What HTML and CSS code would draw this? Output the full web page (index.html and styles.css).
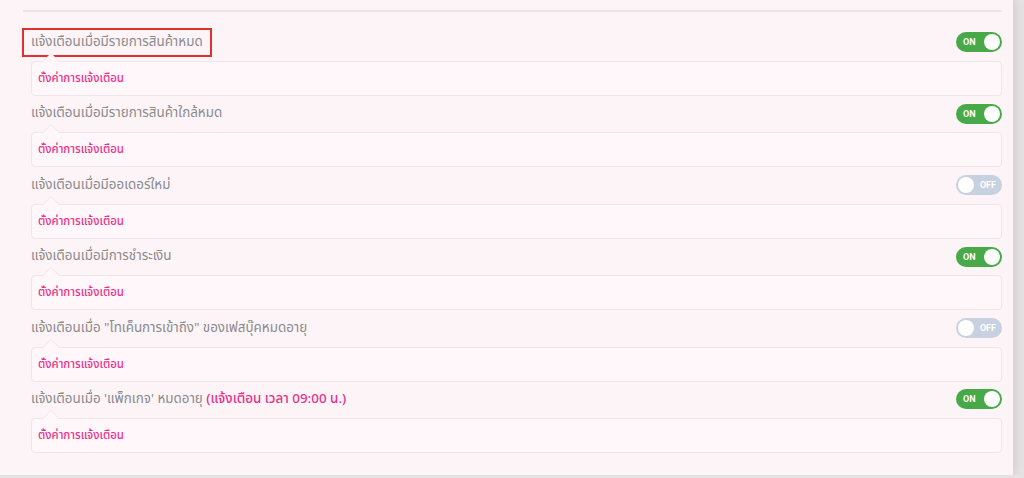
FILE: index.html
```html
<!DOCTYPE html>
<html lang="th">
<head>
<meta charset="utf-8">
<link rel="stylesheet" href="styles.css">
</head>
<body>
<div class="panel">
  <div class="divider"></div>
  <div class="list">
    <div class="row">
      <div class="header">
        <span class="label highlight">แจ้งเตือนเมื่อมีรายการสินค้าหมด</span>
        <span class="toggle on"><span class="toggle-text">ON</span><span class="knob"></span></span>
      </div>
      <div class="box"><span class="box-link">ตั้งค่าการแจ้งเตือน</span></div>
    </div>
    <div class="row">
      <div class="header">
        <span class="label">แจ้งเตือนเมื่อมีรายการสินค้าใกล้หมด</span>
        <span class="toggle on"><span class="toggle-text">ON</span><span class="knob"></span></span>
      </div>
      <div class="box"><span class="box-link">ตั้งค่าการแจ้งเตือน</span></div>
    </div>
    <div class="row">
      <div class="header">
        <span class="label">แจ้งเตือนเมื่อมีออเดอร์ใหม่</span>
        <span class="toggle off"><span class="knob"></span><span class="toggle-text">OFF</span></span>
      </div>
      <div class="box"><span class="box-link">ตั้งค่าการแจ้งเตือน</span></div>
    </div>
    <div class="row">
      <div class="header">
        <span class="label">แจ้งเตือนเมื่อมีการชำระเงิน</span>
        <span class="toggle on"><span class="toggle-text">ON</span><span class="knob"></span></span>
      </div>
      <div class="box"><span class="box-link">ตั้งค่าการแจ้งเตือน</span></div>
    </div>
    <div class="row">
      <div class="header">
        <span class="label">แจ้งเตือนเมื่อ "โทเค็นการเข้าถึง" ของเฟสบุ๊คหมดอายุ</span>
        <span class="toggle off"><span class="knob"></span><span class="toggle-text">OFF</span></span>
      </div>
      <div class="box"><span class="box-link">ตั้งค่าการแจ้งเตือน</span></div>
    </div>
    <div class="row">
      <div class="header">
        <span class="label">แจ้งเตือนเมื่อ 'แพ็กเกจ' หมดอายุ <span class="accent">(แจ้งเตือน เวลา 09:00 น.)</span></span>
        <span class="toggle on"><span class="toggle-text">ON</span><span class="knob"></span></span>
      </div>
      <div class="box"><span class="box-link">ตั้งค่าการแจ้งเตือน</span></div>
    </div>
  </div>
</div>
</body>
</html>
```

FILE: styles.css
```css
* { box-sizing: border-box; }

html, body {
  margin: 0;
  padding: 0;
  background: #e6e2e4;
  font-family: "Noto Sans Thai", "Noto Sans", "DejaVu Sans", sans-serif;
}

.panel {
  width: 1013px;
  height: 475px;
  background: #fdf4f7;
  padding: 10px 11px 0 23px;
  box-shadow: 2px 0 10px rgba(150, 130, 140, 0.25);
}

.divider {
  height: 2px;
  background: #ece4e7;
}

.list {
  padding-top: 12.6px;
  padding-left: 8px;
}

.row {
  padding-top: 7.4px;
}

.header {
  display: flex;
  align-items: center;
  justify-content: space-between;
  height: 21px;
  margin-bottom: 8px;
}

.label {
  font-size: 13.4px;
  color: #8b8b8b;
  line-height: 21px;
  white-space: nowrap;
}

.label.highlight {
  border: 2px solid #e0312f;
  padding: 2px 7px;
  margin-left: -9px;
}

.accent {
  color: #e8318b;
  font-weight: 500;
}

.box {
  position: relative;
  height: 35px;
  border: 1px solid #f0e5ea;
  border-radius: 4px;
  background: #fff7fa;
  display: flex;
  align-items: center;
  padding-left: 6px;
}

.box::before,
.box::after {
  content: "";
  position: absolute;
  left: 11px;
  width: 0;
  height: 0;
  border-left: 8px solid transparent;
  border-right: 8px solid transparent;
}

.box::before {
  top: -9px;
  border-bottom: 8px solid #efe4e9;
}

.box::after {
  top: -8px;
  border-bottom: 8px solid #fff7fa;
}

.box-link {
  font-size: 11.4px;
  font-weight: 500;
  color: #e8318b;
}

.toggle {
  position: relative;
  display: flex;
  align-items: center;
  width: 46px;
  height: 20px;
  border-radius: 10px;
  padding: 0 2px;
  font-family: "Roboto", "Liberation Sans", sans-serif;
  font-size: 9px;
  font-weight: 700;
  color: #ffffff;
}

.toggle.on {
  background: #47a948;
  justify-content: space-between;
  padding-left: 7px;
}

.toggle.off {
  background: #c7d1df;
  justify-content: space-between;
  padding-right: 6px;
}

.knob {
  width: 16px;
  height: 16px;
  border-radius: 50%;
  background: #ffffff;
}
```
